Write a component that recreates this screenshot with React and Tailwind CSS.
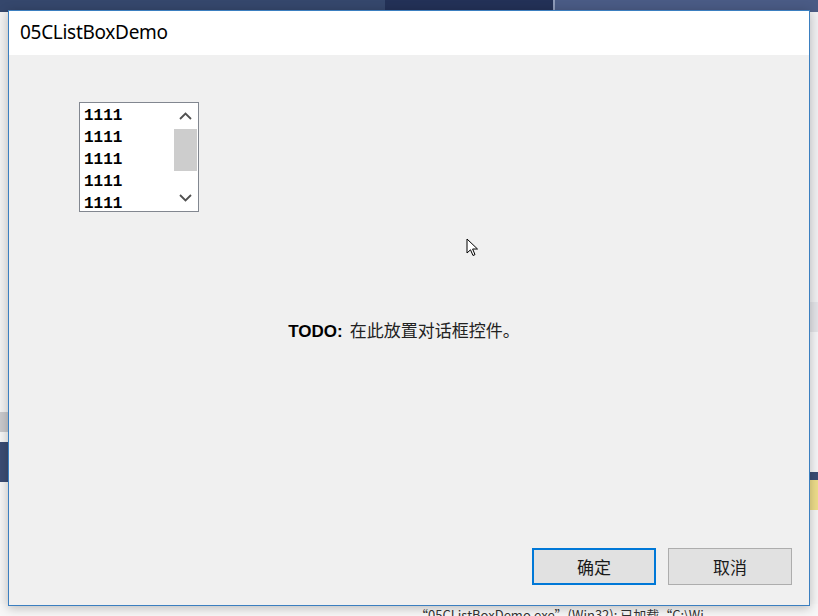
import React from "react";

const items = ["1111", "1111", "1111", "1111", "1111", "1111", "1111"];

// Small chevrons used by the list box scrollbar
const Chevron = ({ up }) => (
  <svg width="13" height="8" viewBox="0 0 13 8" fill="none">
    <path
      d={up ? "M1 7 L6.5 1.5 L12 7" : "M1 1 L6.5 6.5 L12 1"}
      stroke="#505050"
      strokeWidth="1.8"
    />
  </svg>
);

const Cursor = () => (
  <svg width="13" height="19" viewBox="0 0 13 19" className="absolute left-[466px] top-[238px]">
    <path
      d="M1 1 L1 15 L4.5 11.8 L7 17.5 L9 16.6 L6.6 11 L11.5 11 Z"
      fill="#ffffff"
      stroke="#000000"
      strokeWidth="1"
      strokeLinejoin="round"
    />
  </svg>
);

const ListBox = () => (
  <div className="flex h-[110px] w-[120px] border border-[#828790] bg-white">
    <div className="flex-1 overflow-hidden pl-[4px] pt-[2px] font-['Liberation_Mono',monospace] text-[16px] font-bold leading-[22px] text-black">
      {items.map((it, i) => (
        <div key={i}>{it}</div>
      ))}
    </div>
    <div className="flex w-[24px] flex-col items-center bg-white pr-[1px]">
      <div className="flex h-[26px] items-center justify-center">
        <Chevron up />
      </div>
      <div className="h-[42px] w-[23px] bg-[#cdcdcd]" />
      <div className="flex-1" />
      <div className="flex h-[26px] items-center justify-center">
        <Chevron />
      </div>
    </div>
  </div>
);

const Button = ({ label, primary }) => (
  <button
    className={
      "flex h-[37px] w-[124px] items-center justify-center bg-[#e1e1e1] font-['Noto_Sans_CJK_SC',sans-serif] text-[17px] text-[#1a1a1a] " +
      (primary ? "border-2 border-[#0078d7]" : "border border-[#adadad]")
    }
  >
    {label}
  </button>
);

export default function App() {
  return (
    <div className="relative h-[616px] w-[818px] overflow-hidden bg-[#e9e9ec]">
      {/* IDE behind the dialog */}
      <div className="flex h-[12px] w-full">
        <div className="w-[385px] bg-[#35476c]" />
        <div className="w-[168px] bg-[#233157]" />
        <div className="w-[2px] bg-[#8d9ab8]" />
        <div className="flex-1 bg-[#4a5b85]" />
      </div>
      <div className="flex h-[592px] w-full">
        <div className="flex w-[8px] flex-col">
          <div className="h-[400px] bg-[#f2f2f2]" />
          <div className="h-[20px] bg-[#c9c9cc]" />
          <div className="h-[10px] bg-[#f5f5f5]" />
          <div className="h-[40px] bg-[#3a4c74]" />
          <div className="flex-1 bg-[#f5f5f5]" />
        </div>
        <div className="flex-1" />
        <div className="flex w-[9px] flex-col">
          <div className="h-[290px] bg-[#f0f0f2]" />
          <div className="h-[30px] bg-[#e4e4e8]" />
          <div className="h-[140px] bg-[#f5f5f7]" />
          <div className="h-[8px] bg-[#3a4c74]" />
          <div className="h-[30px] bg-[#eedd8a]" />
          <div className="flex-1 bg-[#f5f5f5]" />
        </div>
      </div>
      <div className="flex h-[12px] items-start bg-[#f7f7f7] pl-[415px] font-['Noto_Sans_CJK_SC',sans-serif] text-[13px] leading-[22px] text-[#333]">
        “05CListBoxDemo.exe”(Win32): 已加载“C:\Wi
      </div>

      {/* dialog window */}
      <div className="absolute left-[8px] top-[10px] flex h-[596px] w-[802px] flex-col border border-[#3b7fc0] bg-[#f0f0f0] shadow-[0_2px_10px_rgba(0,0,0,0.25)]">
        <div className="flex h-[44px] items-center bg-white pl-[11px] pb-[1px] font-['Noto_Sans',sans-serif] text-[19px] tracking-[-0.3px] text-black">
          05CListBoxDemo
        </div>
        <div className="flex flex-1 flex-col">
          <div className="pl-[70px] pt-[47px]">
            <ListBox />
          </div>
          <div className="flex items-baseline justify-center pr-[10px] pt-[106px]">
            <span className="font-['Liberation_Sans',sans-serif] text-[17px] font-bold text-black">TODO:</span>
            <span className="pl-[7px] font-['Noto_Sans_CJK_SC',sans-serif] text-[17px] leading-[24px] text-[#222]">
              在此放置对话框控件。
            </span>
          </div>
          <div className="flex-1" />
          <div className="flex justify-end gap-[12px] pb-[20px] pr-[17px]">
            <Button label="确定" primary />
            <Button label="取消" />
          </div>
        </div>
      </div>
      <Cursor />
    </div>
  );
}
